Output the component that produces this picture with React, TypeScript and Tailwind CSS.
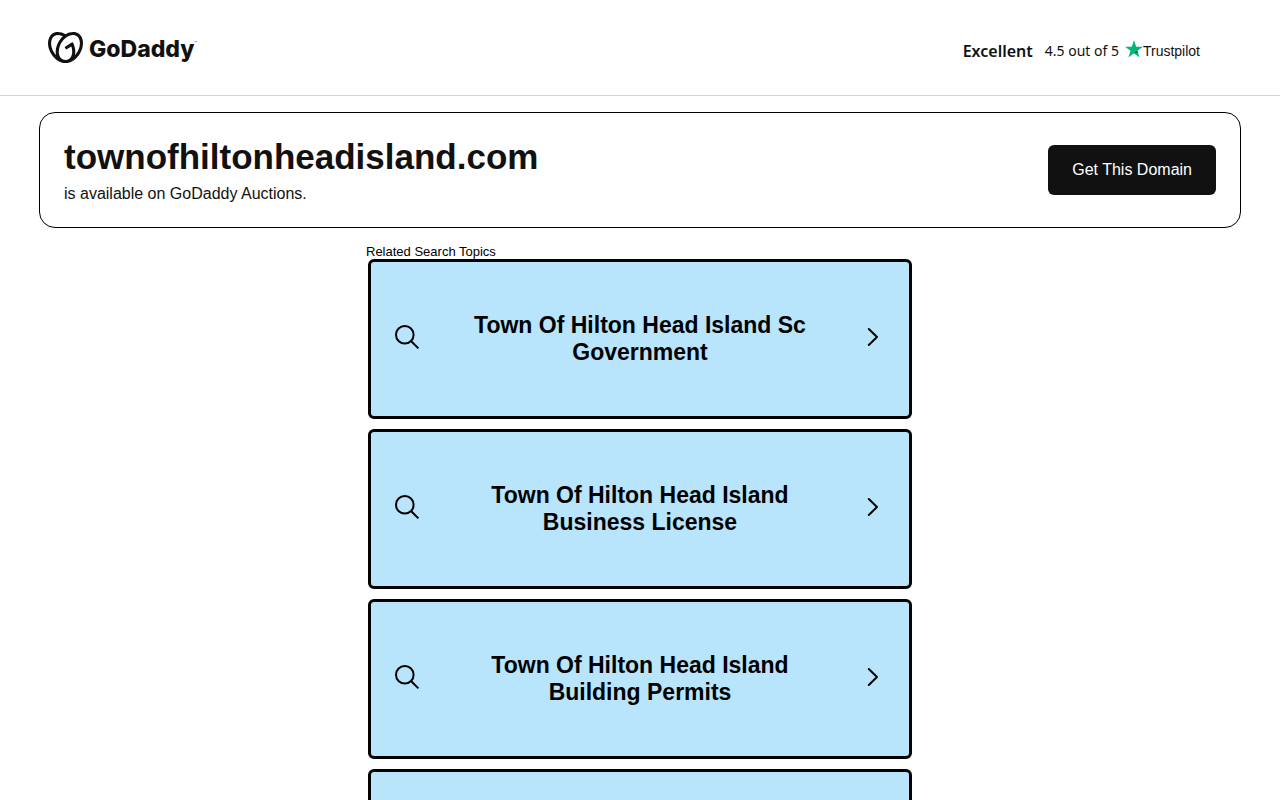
import { SiGodaddy } from "react-icons/si";

const topics = [
  "Town Of Hilton Head Island Sc Government",
  "Town Of Hilton Head Island Business License",
  "Town Of Hilton Head Island Building Permits",
  "",
];

function SearchIcon() {
  return (
    <svg viewBox="0 0 26 26" className="mb-1 size-[26px] shrink-0" fill="none" stroke="currentColor" strokeWidth="2" aria-hidden="true">
      <circle cx="9.8" cy="10.8" r="8.8" />
      <path d="M16 17 23.4 24.4" />
    </svg>
  );
}

// same box as the search icon, so the title stays centred in the card
function ChevronIcon() {
  return (
    <svg
      viewBox="0 0 26 26"
      className="mb-1 size-[26px] shrink-0"
      fill="none"
      stroke="currentColor"
      strokeWidth="2"
      strokeLinecap="round"
      strokeLinejoin="round"
      aria-hidden="true"
    >
      <path d="M9.8 5 18 13 9.8 21" />
    </svg>
  );
}

function Header() {
  return (
    <header className="flex h-24 items-center justify-between border-b border-[#d3d3d3] pr-20 pl-12">
      <a href="#" className="flex items-center gap-1.5 text-[#111]">
        <SiGodaddy className="size-[35px]" aria-hidden="true" />
        <span className="flex items-start pt-0.5 font-['Inter',sans-serif] text-[23px] leading-8 font-extrabold">
          GoDaddy
          <span className="pt-2 text-[4px] leading-none font-normal">™</span>
        </span>
      </a>
      <div className="flex items-center pt-1.5 font-['Noto_Sans',sans-serif] text-[#111]">
        <span className="text-base leading-6 font-semibold">Excellent</span>
        <span className="ml-3 text-sm leading-6">4.5 out of 5</span>
        <a href="#" className="ml-1.5 flex items-center font-['Liberation_Sans',sans-serif] text-sm leading-6">
          <svg viewBox="0 0 24 24" className="mb-1 size-[18px]" aria-hidden="true">
            <path fill="#00b67a" d="M12 0 14.9 8.9H24L16.6 14.4 19.4 23.2 12 17.8 4.6 23.2 7.4 14.4 0 8.9H9.1Z" />
            <path fill="#005128" d="M17.2 16.4 16.6 14.4 12 17.8Z" />
          </svg>
          Trustpilot
        </a>
      </div>
    </header>
  );
}

function DomainBanner() {
  return (
    <section className="mx-[39px] mt-4 flex min-h-[116px] items-center justify-between gap-6 rounded-2xl border border-black px-6 text-[#111]">
      <div>
        <h1 className="text-[35px] leading-[42px] font-bold">townofhiltonheadisland.com</h1>
        <p className="mt-1.5 text-base leading-5">is available on GoDaddy Auctions.</p>
      </div>
      <button type="button" className="h-[50px] rounded-md bg-[#111] px-6 text-base text-white">
        Get This Domain
      </button>
    </section>
  );
}

function TopicCard({ title }: { title: string }) {
  return (
    <a
      href="#"
      className="flex h-40 items-center justify-between rounded-md border-[3px] border-black bg-[#b8e4fc] px-6 text-black"
    >
      <SearchIcon />
      <span className="w-[350px] text-center text-[23px] leading-[27px] font-bold">{title}</span>
      <ChevronIcon />
    </a>
  );
}

export default function App() {
  return (
    <div className="h-screen overflow-hidden bg-white font-['Liberation_Sans',Arial,sans-serif]">
      <Header />
      <DomainBanner />
      <main className="mx-auto mt-4 max-w-[548px]">
        <h2 className="text-[13px] leading-[15px] text-black">Related Search Topics</h2>
        <div className="flex flex-col gap-2.5 px-0.5">
          {topics.map((title, i) => (
            <TopicCard key={i} title={title} />
          ))}
        </div>
      </main>
    </div>
  );
}
